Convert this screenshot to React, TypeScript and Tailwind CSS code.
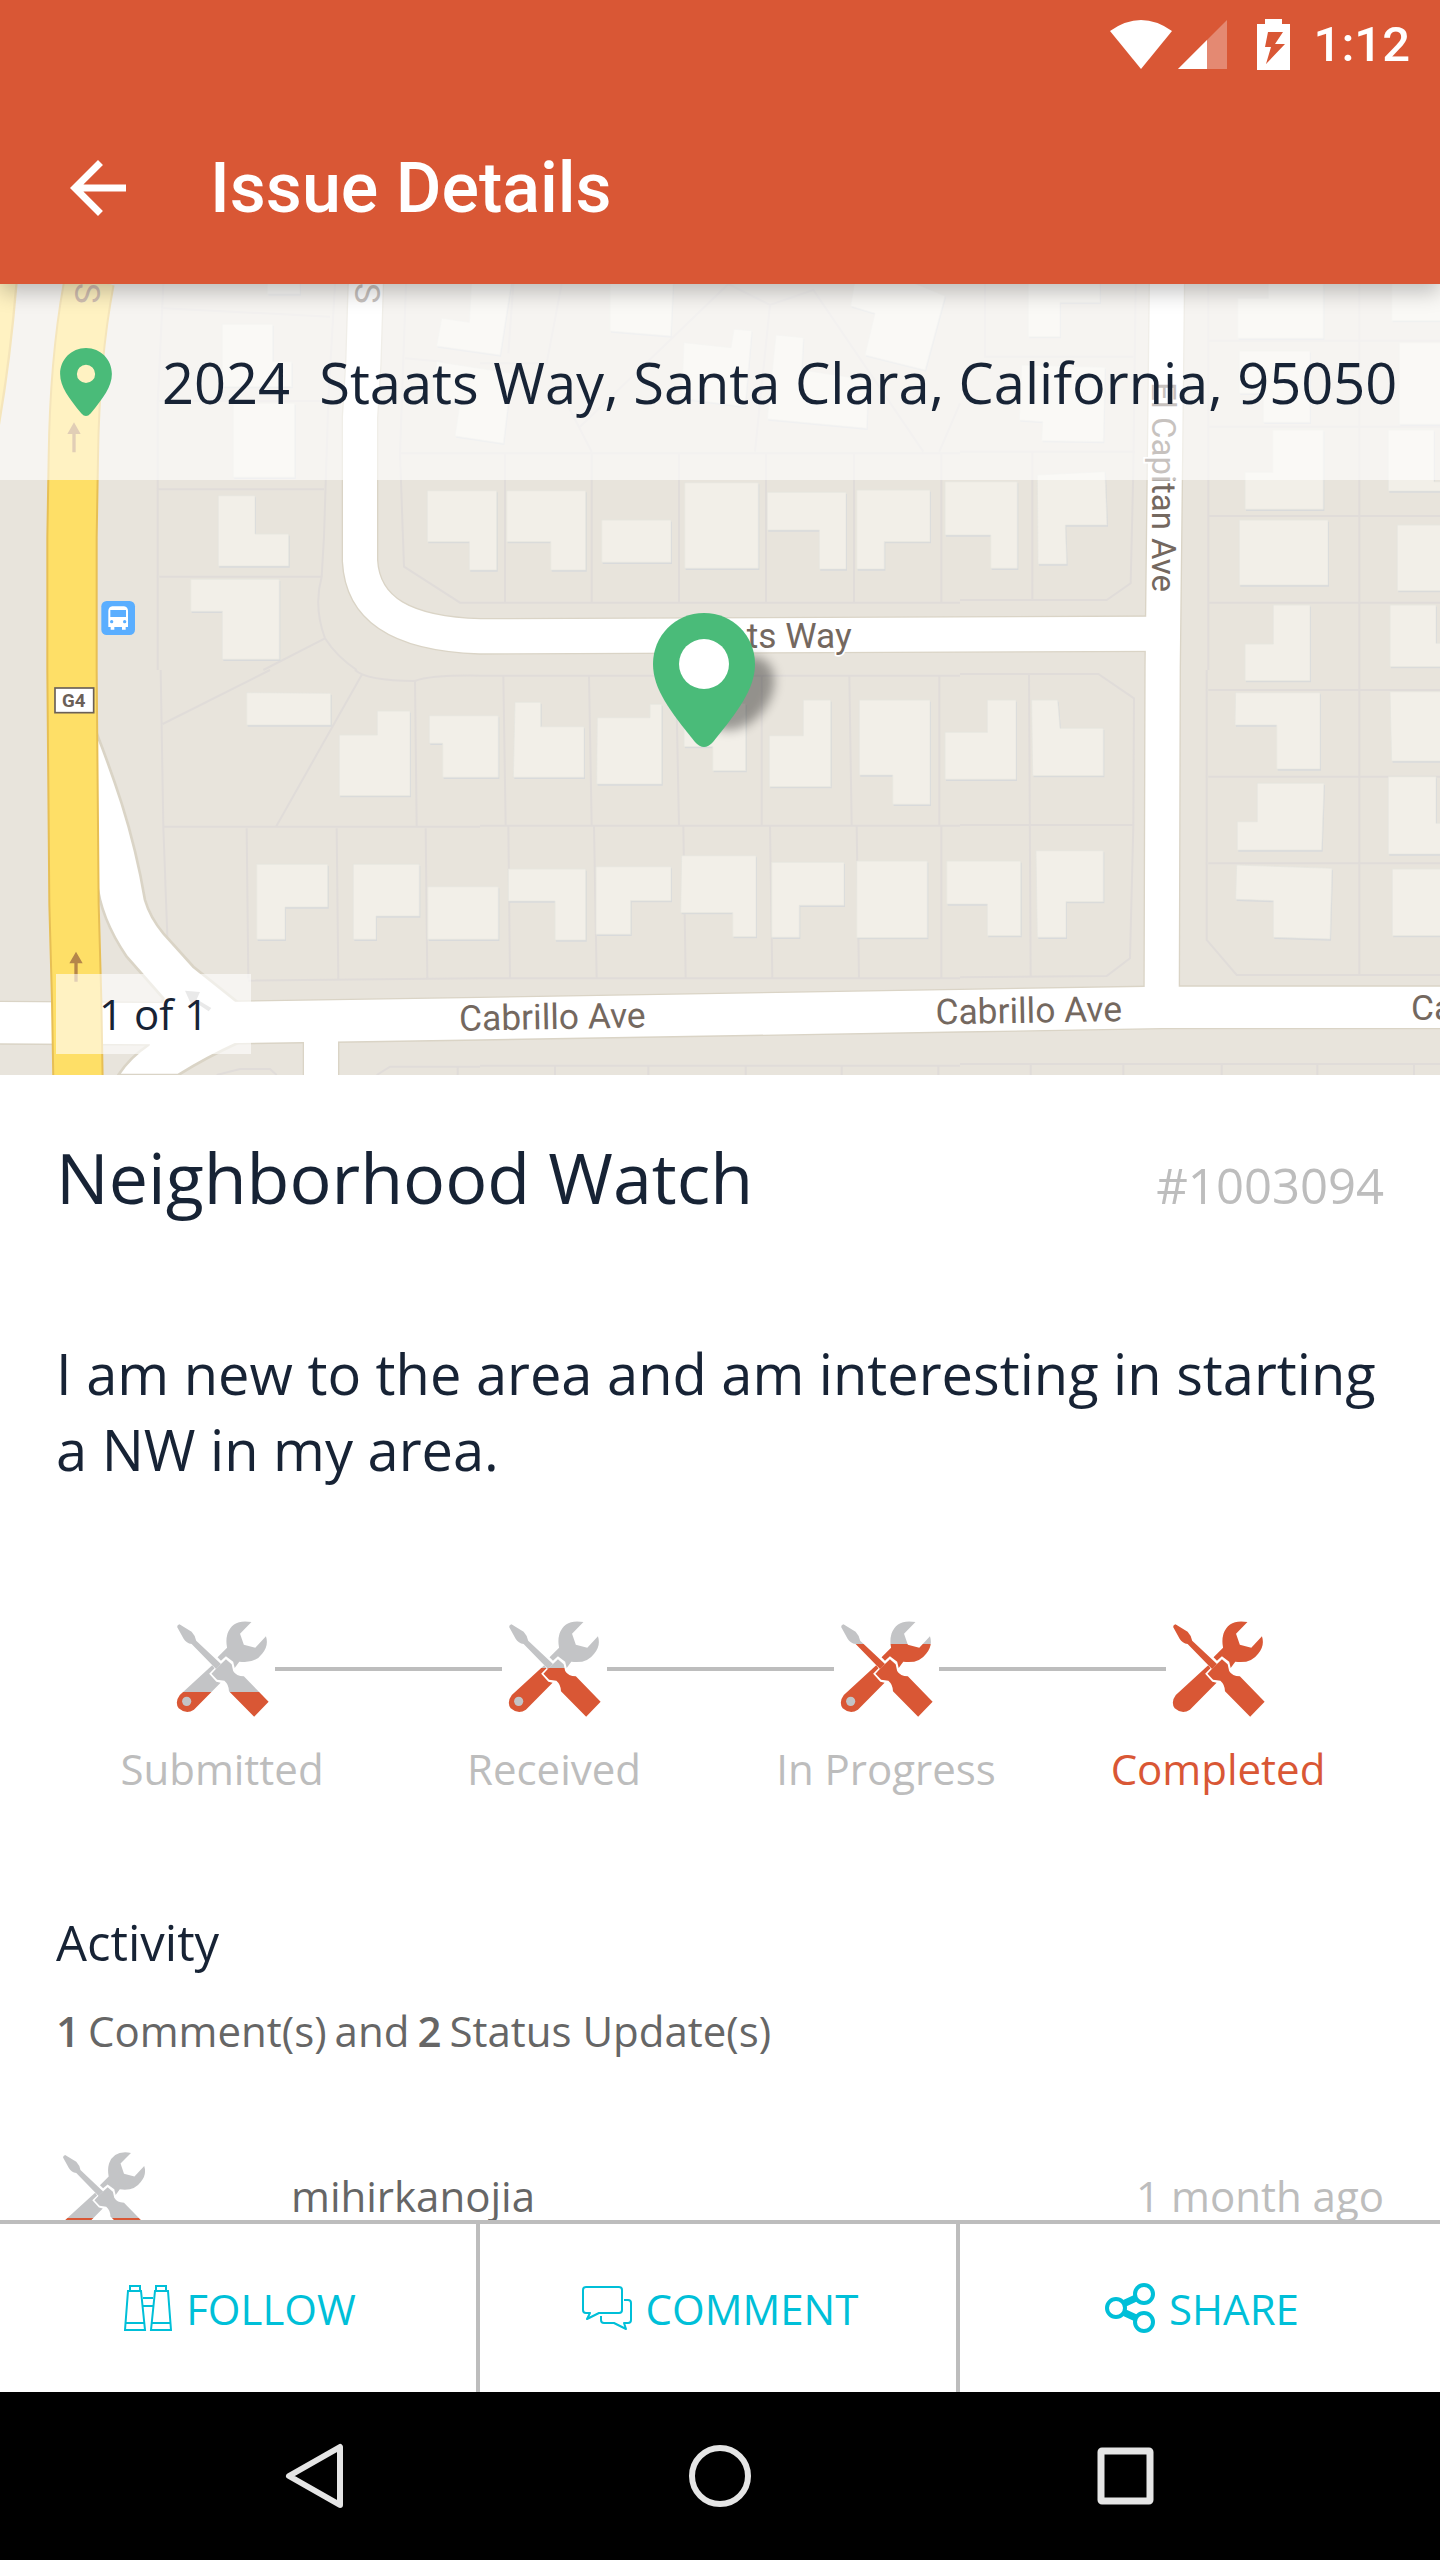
const tiles = [
  {
    id: 'nw',
    place: 'translate(0 -42)',
    lots: 'M490 42L473 400V1200M473 658H972M478 920H965M490 115L990 140M478 393H985M1005 42L985 390L972 800L965 920Q940 1010 975 1105Q1010 1160 1070 1200M975 1105L790 1200M1218 42L1200 550L1212 890L1380 998H1440M1200 550H1440M1215 265L1330 275',
    houses: 'M655 677H765V792H866V888H655ZM572 928H838V1168H667V1024H572ZM667 163H818V275H875V350H667ZM700 400H884V622H700ZM802 30H900V72H802ZM1282 662H1490V900H1408V815H1282ZM1325 145L1408 157L1415 30H1535L1500 255L1310 228ZM1310 275L1535 310L1510 520L1365 498L1380 400L1300 385Z',
  },
  {
    id: 'n',
    place: 'translate(1440 -42)',
    lots: 'M0 550H1440M75 550V998M335 550V998M597 550V998M858 550V998M1122 550V998M1384 550V998M0 998H1440M100 42L85 250M245 42L200 280H0M300 470L745 42L870 105L1000 60L1330 545M870 105L825 545M260 400L335 545M1440 400L1378 545',
    houses: 'M390 30H580L572 198L390 183ZM612 218L753 233L762 178L815 182L795 410L605 385ZM888 195L970 203L965 300L1165 330L1160 475L862 447ZM1125 30H1280L1395 78L1335 300L1155 255L1185 130L1112 108ZM80 662H317V900H212V815H80ZM365 750H573V877H365ZM614 638H835V895H614ZM862 667H1098V897H1018V780H862ZM1130 660H1350V815H1213V897H1130ZM1395 635H1612V895H1532V795H1395Z',
  },
  {
    id: 'ne',
    place: 'translate(2880 -42)',
    lots: 'M0 545H525M217 545V990M527 42L520 600L512 940L440 990H0M745 42V1200M745 212H1440M745 470H1440M745 738H1440M745 998H1440M1198 42V1200M75 42V260H520',
    houses: 'M205 30H420V97H300V200H205ZM185 285L435 292L430 515L245 512L248 455L178 450ZM232 615L435 605L441 765H316L320 882H234ZM833 85H925V30H1090V205H833ZM838 243H1050V457H910V370H838ZM938 480H1090V718H855V607H938ZM838 750H1104V945H838ZM940 1005H1050V1232H855V1122H940ZM1295 30H1460V152H1295ZM1318 218H1460V463H1318ZM1285 480H1422V635H1460V663H1285ZM1312 765H1460V962H1312ZM1290 1005H1428V1120H1460V1190H1290Z',
  },
  {
    id: 'sw',
    place: 'translate(0 1158)',
    lots: 'M482 0L490 470L502 800M490 470H1440M488 162L810 0M1085 15L828 470M1065 0Q1100 32 1245 33Q1290 15 1440 17M1245 33L1250 468M740 475L745 925M1010 475L1015 928M1277 475L1282 928M745 932L1440 925M650 1215L720 1197H810L830 1215M1130 1215L1170 1190H1440M1373 1190V1215',
    houses: 'M740 68L992 70V165H740ZM1018 195H1132V123H1230V377H1018ZM1288 137H1495V322H1328V220H1288ZM770 583H983V711H855V808H770ZM1060 583H1258V738H1128V808H1060ZM1283 650H1495V808H1283Z',
  },
  {
    id: 's',
    place: 'translate(1440 1158)',
    lots: 'M0 17H1440M0 467H1440M70 17L77 467M327 17L335 467M588 17L597 467M845 17V467M1108 17L1115 467M1378 17V467M85 467L90 925M342 467L350 925M610 467L617 925M870 467L877 925M1130 467L1137 925M1384 467V925M0 925H1440M0 1187H1440M225 1187V1215M505 1187V1215M797 1187V1215M1085 1187V1215M1375 1187V1215',
    houses: 'M105 97H182V170H312V322H100ZM352 143H510V103H545V342H350ZM612 100H797V302H698V230H612ZM868 197H970V90H1052V350H868ZM1138 90H1350V403H1238V315H1138ZM1395 187H1522V90H1608V328H1395ZM85 597H317V810H225V693H85ZM348 590H573V692H452V793H348ZM605 557H828V800H758V728H602ZM875 577H1092V706H958V802H875ZM1130 573H1342V803H1130ZM1400 573H1622V797H1522V702H1400Z',
  },
  {
    id: 'se',
    place: 'translate(2880 1158)',
    lots: 'M0 12H415L522 85L520 465L510 865L440 918L0 922M207 12L212 918M0 465H520M740 0V810L830 915H1440M745 60H1440M745 320H1440M745 580H1440M1198 0V915M0 1182H1440M212 1182V1215M490 1182V1215M785 1182V1215M1072 1182V1215M1362 1182V1215',
    houses: 'M215 90H293L300 175H430V317H218ZM228 542H430V695H318V802H232ZM827 68H1080V297H950V165H825ZM892 340H1092L1085 540H832V455H892ZM830 585L1116 595L1110 807L940 802V692L827 688ZM1290 65H1460V273H1295ZM1285 320H1428V460H1460V552H1285ZM1297 597H1460V797H1297Z',
  },
]

const steps = [
  { id: 'submitted', label: 'Submitted', level: 26 },
  { id: 'received', label: 'Received', level: 51 },
  { id: 'progress', label: 'In Progress', level: 76 },
  { id: 'completed', label: 'Completed', level: 100 },
]

const PIN = 'M51 0C22 0 0 23 0 51C0 76 17 98 42 129Q51 139 60 129C85 98 102 76 102 51C102 23 80 0 51 0Z'
const EXPRESSWAY = 'M268 -10Q224 220 220 520L216 760V1160L222 1860L230 2150L234 2390'
const CABRILLO = 'M-20 2216L470 2219L1440 2204L2880 2180L3485 2170H4340'

function Streets() {
  return (
    <>
      <path d="M1098 -20L1090 240L1080 400V830C1088 985 1220 1050 1440 1057L3490 1049" />
      <path d="M3501 -20L3488 1150L3485 2170" />
      <path d="M963 2200V2400" />
    </>
  )
}

function MapView() {
  return (
    <svg
      viewBox="0 0 4320 2373"
      preserveAspectRatio="xMidYMid slice"
      className="block h-full w-full bg-[#e8e4dc]"
      role="img"
      aria-label="Map of Staats Way"
    >
      <defs>
        <filter id="pin-blur" x="-50%" y="-50%" width="200%" height="200%">
          <feGaussianBlur stdDeviation="16" />
        </filter>
      </defs>
      {tiles.map((t) => (
        <g key={t.id} transform={t.place}>
          <path d={t.lots} fill="none" stroke="#e0dcd9" strokeWidth="6" />
        </g>
      ))}
      {tiles.map((t) => (
        <g key={t.id} transform={t.place}>
          <path d={t.houses} fill="#d9dadb" transform="translate(3 5)" />
          <path d={t.houses} fill="#f2efe8" stroke="#e6e5e0" strokeWidth="2" />
        </g>
      ))}

      <g fill="none" stroke="#dad4c6" strokeWidth="110"><Streets /></g>
      <path d={CABRILLO} fill="none" stroke="#dad4c6" strokeWidth="132" />
      <path
        d="M290 1348Q330 1450 365 1558Q410 1700 435 1848Q450 1900 490 1948L580 2048L712 2154V2278Q620 2320 535 2373H355Q390 2320 445 2283L490 2143L380 2018Q300 1900 290 1788Z"
        fill="#fff"
        stroke="#dad4c6"
        strokeWidth="8"
      />
      <g fill="none" stroke="#fff" strokeWidth="102"><Streets /></g>
      <path d={CABRILLO} fill="none" stroke="#fff" strokeWidth="124" />

      <g fill="none">
        <path d={EXPRESSWAY} stroke="#e7bf55" strokeWidth="154" />
        <path d={EXPRESSWAY} stroke="#fedf67" strokeWidth="142" />
      </g>
      <path d="M-10 -10H50Q30 240 -10 460Z" fill="#fedf67" stroke="#e7bf55" strokeWidth="7" />

      <g fill="#b5864a">
        <path d="M228 2003L248 2038H233V2093H223V2038H208Z" />
        <path d="M222 415L242 450H227V505H217V450H202Z" />
      </g>
      <path d="M555 2120L600 2124L590 2146L634 2172L626 2182L584 2154L574 2162Z" fill="#c9c9c9" />

      <rect x="165" y="1212" width="116" height="74" fill="#fff" stroke="#6b6058" strokeWidth="5" />
      <text x="221" y="1269" textAnchor="middle" fill="#6b6058" fontSize="56" fontWeight="700" fontFamily="Roboto, sans-serif">G4</text>

      <g transform="translate(304 951)">
        <rect width="101" height="102" rx="16" fill="#5aaeff" />
        <path d="M33 16H68Q80 18 80 30V78H73V86H62V78H39V86H28V78H21V30Q21 18 33 16Z" fill="#fff" />
        <path d="M27 27H74V48H27ZM26 62a5 5 0 1 0 10 0a5 5 0 1 0-10 0M65 62a5 5 0 1 0 10 0a5 5 0 1 0-10 0" fill="#5aaeff" />
      </g>

      <g fill="#74685f" stroke="#fff" strokeWidth="10" paintOrder="stroke" fontSize="106" fontFamily="Roboto, sans-serif">
        <text x="2555" y="1093" textAnchor="end">Staats Way</text>
        <text transform="translate(1378 2240) rotate(-1)">Cabrillo Ave</text>
        <text transform="translate(2807 2221) rotate(-1)">Cabrillo Ave</text>
        <text x="4233" y="2208">Cabrillo Ave</text>
        <text transform="translate(3457 294) rotate(90)" fontSize="99">El Capitan Ave</text>
        <text transform="translate(226 -4) rotate(90)" fill="#8d5f3e" stroke="none">S</text>
        <text transform="translate(1064 -4) rotate(90)">S</text>
      </g>

      <ellipse cx="2218" cy="1228" rx="88" ry="125" transform="rotate(40 2218 1228)" fill="#000" opacity=".36" filter="url(#pin-blur)" />
      <g transform="translate(1959 987) scale(3 3)">
        <path d={PIN} fill="#4abb79" />
        <circle cx="51" cy="51" r="25" fill="#fff" />
      </g>
    </svg>
  )
}

function ToolsIcon({ id, level, className }: { id: string; level: number; className: string }) {
  const edge = `${100 - level}%`
  return (
    <svg viewBox="195 92 244 288" preserveAspectRatio="none" className={className} aria-hidden="true">
      <defs>
        <linearGradient id={id} gradientUnits="userSpaceOnUse" x1="0" y1="92" x2="0" y2="380">
          <stop offset={edge} stopColor="#c3c4c6" />
          <stop offset={edge} stopColor="#d95735" />
        </linearGradient>
      </defs>
      <g fill={`url(#${id})`}>
        <path d="M204 102L236 124Q246 136 248 151L313 221L300 236L236 161Q222 158 215 145L198 110Q198 104 204 102Z" />
        <path d="M326 207L341 222L345 242Q353 258 373 258L438 334L400 379L334 303Q334 283 322 271L303 268L288 250L302 233Z" />
        <path d="M393 95Q344 85 330 130Q325 150 329 172L304 201L313 211L326 198L345 214L349 233L361 214Q402 221 421 190Q439 166 431 138L403 172L373 163L363 130Z" />
        <path d="M290 225L205 314Q191 335 202 354Q222 374 242 358L312 277L301 274L282 250L296 234Z" />
      </g>
      {level < 100 && <ellipse cx="223" cy="333" rx="12" ry="14" fill="#c3c4c6" />}
    </svg>
  )
}

function BinocularsIcon() {
  return (
    <svg viewBox="0 0 48 46" className="h-[46px] w-12" fill="none" stroke="currentColor" strokeWidth="2" aria-hidden="true">
      <path d="M4 6H17L21 45H1ZM6 6V1H16V6M2 38H20M31 6H44L47 45H27ZM32 6V1H42V6M28 38H46M19 13H29M19 21H29" />
    </svg>
  )
}

function CommentsIcon() {
  return (
    <svg viewBox="0 0 50 44" className="h-11 w-[50px]" fill="none" stroke="currentColor" strokeWidth="2" strokeLinejoin="round" aria-hidden="true">
      <path d="M4 1H37Q40 1 40 4V24Q40 27 37 27H17L5 33L8 27H4Q1 27 1 24V4Q1 1 4 1Z" />
      <path d="M42 14H46Q49 14 49 17V34Q49 37 46 37H42L44 43L32 37H22Q19 37 19 34V30" />
    </svg>
  )
}

function ShareIcon() {
  return (
    <svg viewBox="0 0 50 50" className="size-[50px]" fill="none" stroke="currentColor" aria-hidden="true">
      <path d="M18 21L31 15M18 29L31 35" strokeWidth="7" />
      <g strokeWidth="4">
        <circle cx="11" cy="25" r="9" />
        <circle cx="39" cy="11" r="9" />
        <circle cx="39" cy="39" r="9" />
      </g>
    </svg>
  )
}

const actions = [
  { label: 'FOLLOW', icon: <BinocularsIcon /> },
  { label: 'COMMENT', icon: <CommentsIcon /> },
  { label: 'SHARE', icon: <ShareIcon /> },
]

function Header() {
  return (
    <header className="relative z-10 bg-[#d95735] font-[Roboto,sans-serif] font-medium text-white shadow-[0_8px_20px_rgba(0,0,0,0.24)]">
      <div className="flex h-[88px] items-center justify-end pr-[30px]">
        <svg viewBox="0 0 62 49" className="h-[49px] w-[62px]" fill="currentColor" aria-hidden="true">
          <path d="M0 11Q31 -11 62 11L31 49Z" />
        </svg>
        <svg viewBox="0 0 49 49" className="ml-1.5 size-[49px]" fill="currentColor" aria-hidden="true">
          <path d="M49 0V49H0Z" opacity=".3" />
          <path d="M29 20V49H0Z" />
        </svg>
        <svg viewBox="0 0 33 51" className="ml-[30px] h-[51px] w-[33px]" fill="currentColor" aria-hidden="true">
          <path fillRule="evenodd" d="M8 0H25V5H33V51H0V5H8ZM11 13L8 28H14L9 45L28 25H18L26 13Z" />
        </svg>
        <span className="ml-6 text-[49px] leading-none">1:12</span>
      </div>
      <div className="flex h-[196px] items-center gap-[70px] px-14 pt-1">
        <button type="button" aria-label="Back" className="shrink-0">
          <svg viewBox="0 0 24 24" className="size-[84px]" fill="currentColor" aria-hidden="true">
            <path d="M20 11H7.83l5.59-5.59L12 4l-8 8 8 8 1.41-1.41L7.83 13H20v-2z" />
          </svg>
        </button>
        <h1 className="text-[70px] leading-none">Issue Details</h1>
      </div>
    </header>
  )
}

function StatusSteps() {
  return (
    <ol className="mt-[134px] grid grid-cols-4">
      {steps.map((s, i) => (
        <li key={s.id} className="flex flex-col items-center">
          <div className="flex w-full items-center">
            <div className={i > 0 ? 'h-1 flex-1 bg-[#bdbdbd]' : 'h-1 flex-1'} />
            <ToolsIcon id={s.id} level={s.level} className="mx-1.5 h-24 w-[93px]" />
            <div className={i < steps.length - 1 ? 'h-1 flex-1 bg-[#bdbdbd]' : 'h-1 flex-1'} />
          </div>
          <span
            className={
              s.level === 100
                ? 'mt-6 text-[42px] leading-[56px] text-[#d95735]'
                : 'mt-6 text-[42px] leading-[56px] text-[#bdbdbd]'
            }
          >
            {s.label}
          </span>
        </li>
      ))}
    </ol>
  )
}

export default function App() {
  return (
    <div className="flex h-screen flex-col bg-white font-['Open_Sans',sans-serif] text-[#172335]">
      <Header />

      <main className="min-h-0 flex-1 overflow-y-auto [scrollbar-width:none]">
        <section className="relative h-[791px] overflow-hidden">
          <MapView />
          <div className="absolute inset-x-0 top-0 flex h-[196px] items-center gap-[50px] bg-white/60 pl-[60px]">
            <svg viewBox="0 0 102 134" className="h-[68px] w-[52px] shrink-0" fill="#4abb79" aria-hidden="true">
              <path fillRule="evenodd" d={`${PIN}M51 33a18 18 0 1 0 0 36a18 18 0 1 0 0-36Z`} />
            </svg>
            <span className="text-[56px] leading-[76px] whitespace-pre">2024  Staats Way, Santa Clara, California, 95050</span>
          </div>
          <div className="absolute bottom-[21px] left-14 bg-white/60 px-[43px] py-3 text-[42px] leading-[56px]">1 of 1</div>
        </section>

        <section className="px-14 pt-[54px]">
          <div className="flex items-baseline justify-between">
            <h2 className="text-[70px] leading-[96px]">Neighborhood Watch</h2>
            <span className="text-[49px] leading-[66px] text-[#bdbdbd]">#1003094</span>
          </div>
          <p className="mt-[110px] text-[56px] leading-[76px]">
            I am new to the area and am interesting in starting a NW in my area.
          </p>

          <StatusSteps />

          <h3 className="mt-28 text-[49px] leading-[66px]">Activity</h3>
          <p className="mt-7 flex gap-2 text-[42px] leading-[56px] text-[#666]">
            <b className="font-semibold">1</b>
            <span>Comment(s)</span>
            <span>and</span>
            <b className="font-semibold">2</b>
            <span>Status Update(s)</span>
          </p>

          <ul className="mt-[93px] text-[42px] leading-[56px]">
            <li className="flex items-center">
              <ToolsIcon id="activity" level={25} className="ml-1.5 h-[88px] w-[85px]" />
              <span className="ml-36 flex-1 text-[#666]">mihirkanojia</span>
              <time className="text-[#bdbdbd]">1 month ago</time>
            </li>
          </ul>
        </section>
      </main>

      <div className="grid h-[172px] grid-cols-3 divide-x-4 divide-[#bdbdbd] border-t-4 border-[#bdbdbd]">
        {actions.map((a) => (
          <button key={a.label} type="button" className="flex items-center justify-center gap-3.5 pl-1 text-[42px] text-[#00bfd8]">
            {a.icon}
            {a.label}
          </button>
        ))}
      </div>

      <nav className="flex h-[168px] items-center justify-center gap-[321px] bg-black text-[#e5e5e5]">
        <button type="button" aria-label="Back">
          <svg viewBox="0 0 84 84" className="size-[84px]" fill="none" stroke="currentColor" strokeWidth="6" strokeLinejoin="round" aria-hidden="true">
            <path d="M67 13V71L16 42Z" />
          </svg>
        </button>
        <button type="button" aria-label="Home">
          <svg viewBox="0 0 84 84" className="size-[84px]" fill="none" stroke="currentColor" strokeWidth="6" aria-hidden="true">
            <circle cx="42" cy="42" r="28" />
          </svg>
        </button>
        <button type="button" aria-label="Recent apps">
          <svg viewBox="0 0 84 84" className="size-[84px]" fill="none" stroke="currentColor" strokeWidth="7" aria-hidden="true">
            <rect x="18" y="17" width="49" height="50" rx="1" />
          </svg>
        </button>
      </nav>
    </div>
  )
}
